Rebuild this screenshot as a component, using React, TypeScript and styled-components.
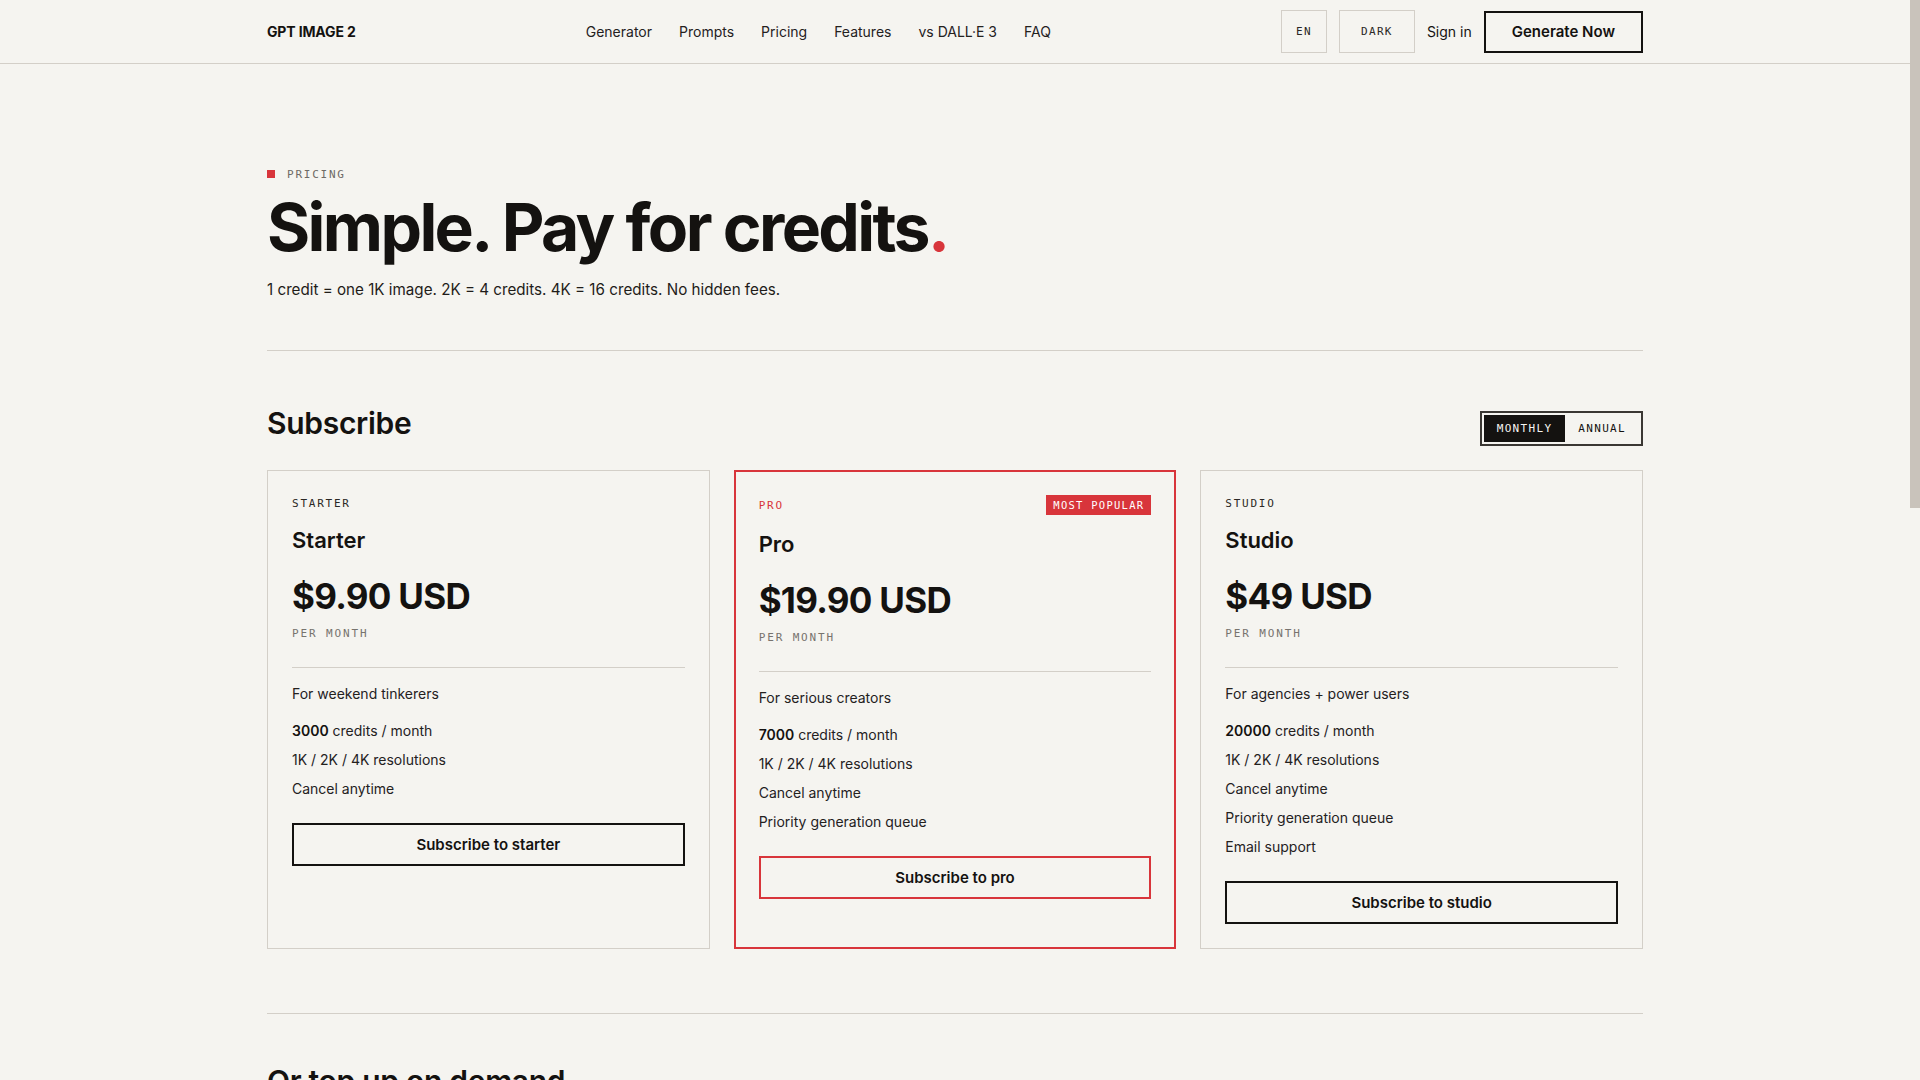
import React, { useState } from 'react'
import styled, { createGlobalStyle, css } from 'styled-components'

const RED = '#d8353b'
const INK = '#141210'
const LINE = '#d3cfc8'
const BG = '#f5f4f0'
const MONO = `"DejaVu Sans Mono", "Liberation Mono", monospace`

const GlobalStyle = createGlobalStyle`
  html { background: ${BG}; scrollbar-width: none; }
  html::-webkit-scrollbar { display: none; }
  body {
    margin: 0;
    background: ${BG};
    color: ${INK};
    font-family: Inter, "Noto Sans", sans-serif;
    -webkit-font-smoothing: antialiased;
  }
  * { box-sizing: border-box; }
`

// the page keeps a 10px gutter on the right for the scroll rail
const Page = styled.div`
  margin-right: 10px;
`
const ScrollRail = styled.div`
  position: fixed;
  top: 0;
  right: 0;
  width: 10px;
  height: 100vh;
  background: ${BG};
`
const ScrollThumb = styled.div`
  height: 508px;
  background: #c9c3bb;
`

const Container = styled.div`
  max-width: 1440px;
  margin: 0 auto;
  padding: 0 32px;
`

/* ---------- header ---------- */
const Header = styled.header`
  border-bottom: 1px solid ${LINE};
`
const HeaderInner = styled(Container)`
  height: 63px;
  display: flex;
  align-items: center;
  justify-content: space-between;
`
const Logo = styled.a`
  font-size: 14px;
  font-weight: 700;
  letter-spacing: -0.01em;
  color: ${INK};
  text-decoration: none;
`
const Nav = styled.nav`
  display: flex;
  gap: 27px;
`
const NavLink = styled.a`
  font-size: 14px;
  color: #24211e;
  text-decoration: none;
`
const Actions = styled.div`
  display: flex;
  align-items: center;
  gap: 12px;
`
const GhostBox = styled.button<{ $w: number }>`
  width: ${(p) => p.$w}px;
  height: 43px;
  border: 1px solid ${LINE};
  background: transparent;
  font-family: ${MONO};
  font-size: 11px;
  letter-spacing: 0.12em;
  color: #2b2825;
  padding: 0;
`
const SignIn = styled.a`
  font-size: 14px;
  color: ${INK};
  text-decoration: none;
`
const CtaButton = styled.button`
  height: 42px;
  padding: 0 26px;
  border: 2px solid ${INK};
  background: transparent;
  font-family: inherit;
  font-size: 15px;
  font-weight: 600;
  color: ${INK};
`

/* ---------- hero ---------- */
const Hero = styled.section`
  padding: 102px 0 48px;
  border-bottom: 1px solid ${LINE};
`
const Eyebrow = styled.div`
  display: flex;
  align-items: center;
  gap: 12px;
  height: 16px;
  font-family: ${MONO};
  font-size: 11px;
  letter-spacing: 0.16em;
  color: #6e6a65;
  &::before {
    content: '';
    width: 8px;
    height: 8px;
    background: ${RED};
  }
`
const Title = styled.h1`
  margin: 10px 0 0;
  font-size: 66px;
  line-height: 70px;
  font-weight: 700;
  letter-spacing: -0.04em;
`
const Dot = styled.span`
  color: ${RED};
`
const Lead = styled.p`
  margin: 16px 0 0;
  font-size: 15.2px;
  line-height: 24px;
  color: #1f1c19;
`

/* ---------- sections ---------- */
const Section = styled.section<{ $divider?: boolean; $top?: number }>`
  padding: ${(p) => p.$top ?? 54}px 0 64px;
  ${(p) =>
    p.$divider &&
    css`
      border-bottom: 1px solid ${LINE};
    `}
`
const SectionHead = styled.div`
  display: flex;
  justify-content: space-between;
  align-items: flex-end;
  margin-bottom: 24px;
`
const SectionTitle = styled.h2`
  margin: 0 0 5px;
  font-size: 30px;
  line-height: 36px;
  font-weight: 600;
  letter-spacing: -0.01em;
`

const Toggle = styled.div`
  display: flex;
  padding: 2px;
  border: 2px solid #3a3733;
  height: 35px;
`
const ToggleOpt = styled.button<{ $on: boolean }>`
  border: 0;
  padding: 0 13px;
  font-family: ${MONO};
  font-size: 11px;
  letter-spacing: 0.12em;
  background: ${(p) => (p.$on ? INK : 'transparent')};
  color: ${(p) => (p.$on ? '#f5f4f0' : INK)};
`

/* ---------- plan cards ---------- */
const Grid = styled.div<{ $cols: number }>`
  display: grid;
  grid-template-columns: repeat(${(p) => p.$cols}, 1fr);
  gap: 24px;
`
const Card = styled.div<{ $hot?: boolean }>`
  border: 1px solid ${LINE};
  padding: 24px;
  ${(p) =>
    p.$hot &&
    css`
      border: 2px solid ${RED};
      padding: 23px;
    `}
`
const CardTop = styled.div`
  display: flex;
  justify-content: space-between;
  align-items: center;
  min-height: 16px;
`
const Tier = styled.span<{ $hot?: boolean }>`
  font-family: ${MONO};
  font-size: 11px;
  letter-spacing: 0.16em;
  color: ${(p) => (p.$hot ? RED : '#2b2825')};
`
const Badge = styled.span`
  height: 20px;
  display: inline-flex;
  align-items: center;
  padding: 0 7px;
  background: ${RED};
  color: #fff;
  font-family: ${MONO};
  font-size: 10.5px;
  letter-spacing: 0.12em;
`
const PlanName = styled.h3`
  margin: 15px 0 0;
  font-size: 22px;
  line-height: 28px;
  font-weight: 600;
`
const Price = styled.div`
  margin-top: 20px;
  font-size: 35px;
  line-height: 44px;
  font-weight: 700;
  letter-spacing: -0.02em;
`
const Per = styled.div`
  margin-top: 8px;
  font-family: ${MONO};
  font-size: 11px;
  line-height: 16px;
  letter-spacing: 0.17em;
  color: #77736e;
`
const Rule = styled.hr`
  margin: 25px 0 16px;
  border: 0;
  height: 1px;
  background: ${LINE};
`
const Blurb = styled.p`
  margin: 0;
  font-size: 14px;
  line-height: 20px;
  color: #24211e;
`
const Features = styled.ul`
  list-style: none;
  margin: 17px 0 0;
  padding: 0;
  display: flex;
  flex-direction: column;
  gap: 9px;
  li {
    font-size: 14px;
    line-height: 20px;
    color: #24211e;
  }
  b { font-weight: 600; color: ${INK}; }
`
const PlanButton = styled.button<{ $hot?: boolean }>`
  margin-top: 24px;
  width: 100%;
  height: 43px;
  background: transparent;
  border: 2px solid ${(p) => (p.$hot ? RED : INK)};
  font-family: inherit;
  font-size: 15px;
  font-weight: 600;
  color: ${INK};
`

/* ---------- top-up + footer ---------- */
const Pack = styled.div`
  border: 1px solid ${LINE};
  padding: 24px;
`
const PackCredits = styled.div`
  margin-top: 14px;
  font-size: 28px;
  line-height: 36px;
  font-weight: 700;
  letter-spacing: -0.015em;
`
const Footer = styled.footer`
  border-top: 1px solid ${LINE};
  min-height: 540px;
`
const FooterInner = styled(Container)`
  padding-top: 48px;
  display: flex;
  justify-content: space-between;
  font-size: 14px;
  color: #55514c;
`

const plans = [
  {
    id: 'starter',
    name: 'Starter',
    price: '$9.90 USD',
    blurb: 'For weekend tinkerers',
    credits: '3000',
    extra: ['1K / 2K / 4K resolutions', 'Cancel anytime'],
  },
  {
    id: 'pro',
    name: 'Pro',
    price: '$19.90 USD',
    blurb: 'For serious creators',
    credits: '7000',
    extra: ['1K / 2K / 4K resolutions', 'Cancel anytime', 'Priority generation queue'],
    hot: true,
  },
  {
    id: 'studio',
    name: 'Studio',
    price: '$49 USD',
    blurb: 'For agencies + power users',
    credits: '20000',
    extra: ['1K / 2K / 4K resolutions', 'Cancel anytime', 'Priority generation queue', 'Email support'],
  },
]

const packs = [
  { credits: '500', price: '$4.90 USD' },
  { credits: '1500', price: '$12.90 USD' },
  { credits: '5000', price: '$39 USD' },
  { credits: '15000', price: '$99 USD' },
]

const navItems = ['Generator', 'Prompts', 'Pricing', 'Features', 'vs DALL·E 3', 'FAQ']

export default function App() {
  const [annual, setAnnual] = useState(false)

  return (
    <>
      <GlobalStyle />
      <Page>
        <Header>
          <HeaderInner>
            <Logo href="#">GPT IMAGE 2</Logo>
            <Nav>
              {navItems.map((n) => (
                <NavLink key={n} href="#">
                  {n}
                </NavLink>
              ))}
            </Nav>
            <Actions>
              <GhostBox $w={46}>EN</GhostBox>
              <GhostBox $w={76}>DARK</GhostBox>
              <SignIn href="#">Sign in</SignIn>
              <CtaButton>Generate Now</CtaButton>
            </Actions>
          </HeaderInner>
        </Header>

        <Container>
          <Hero>
            <Eyebrow>PRICING</Eyebrow>
            <Title>
              Simple. Pay for credits<Dot>.</Dot>
            </Title>
            <Lead>1 credit = one 1K image. 2K = 4 credits. 4K = 16 credits. No hidden fees.</Lead>
          </Hero>

          <Section $divider>
            <SectionHead>
              <SectionTitle>Subscribe</SectionTitle>
              <Toggle>
                <ToggleOpt $on={!annual} onClick={() => setAnnual(false)}>
                  MONTHLY
                </ToggleOpt>
                <ToggleOpt $on={annual} onClick={() => setAnnual(true)}>
                  ANNUAL
                </ToggleOpt>
              </Toggle>
            </SectionHead>
            <Grid $cols={3}>
              {plans.map((p) => (
                <Card key={p.id} $hot={p.hot}>
                  <CardTop>
                    <Tier $hot={p.hot}>{p.id.toUpperCase()}</Tier>
                    {p.hot && <Badge>MOST POPULAR</Badge>}
                  </CardTop>
                  <PlanName>{p.name}</PlanName>
                  <Price>{p.price}</Price>
                  <Per>PER MONTH</Per>
                  <Rule />
                  <Blurb>{p.blurb}</Blurb>
                  <Features>
                    <li>
                      <b>{p.credits}</b> credits / month
                    </li>
                    {p.extra.map((f) => (
                      <li key={f}>{f}</li>
                    ))}
                  </Features>
                  <PlanButton $hot={p.hot}>Subscribe to {p.id}</PlanButton>
                </Card>
              ))}
            </Grid>
          </Section>

          <Section $top={49}>
            <SectionHead>
              <SectionTitle>Or top up on demand</SectionTitle>
            </SectionHead>
            <Grid $cols={4}>
              {packs.map((k) => (
                <Pack key={k.credits}>
                  <Tier>ONE-TIME</Tier>
                  <PackCredits>{k.credits} credits</PackCredits>
                  <Per>{k.price}</Per>
                  <PlanButton>Buy credits</PlanButton>
                </Pack>
              ))}
            </Grid>
          </Section>
        </Container>

        <Footer>
          <FooterInner>
            <span>© GPT IMAGE 2</span>
            <span>Terms · Privacy · Contact</span>
          </FooterInner>
        </Footer>
      </Page>
      <ScrollRail>
        <ScrollThumb />
      </ScrollRail>
    </>
  )
}
